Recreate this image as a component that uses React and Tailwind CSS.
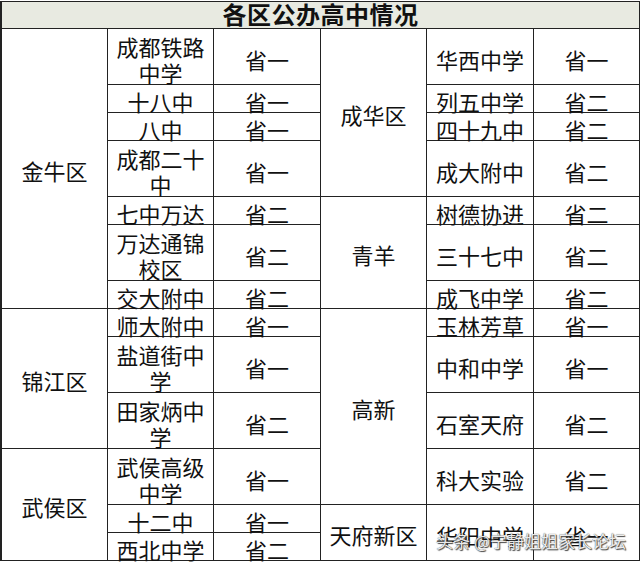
const left = [
  {
    name: '金牛区',
    rows: [
      { school: ['成都铁路', '中学'], level: '省一' },
      { school: ['十八中'], level: '省一' },
      { school: ['八中'], level: '省一' },
      { school: ['成都二十', '中'], level: '省一' },
      { school: ['七中万达'], level: '省二' },
      { school: ['万达通锦', '校区'], level: '省二' },
      { school: ['交大附中'], level: '省二' },
    ],
  },
  {
    name: '锦江区',
    rows: [
      { school: ['师大附中'], level: '省一' },
      { school: ['盐道街中', '学'], level: '省一' },
      { school: ['田家炳中', '学'], level: '省二' },
    ],
  },
  {
    name: '武侯区',
    rows: [
      { school: ['武侯高级', '中学'], level: '省一' },
      { school: ['十二中'], level: '省一' },
      { school: ['西北中学'], level: '省二' },
    ],
  },
];

const right = [
  {
    name: '成华区',
    rows: [
      { school: ['华西中学'], level: '省一', tall: true },
      { school: ['列五中学'], level: '省二' },
      { school: ['四十九中'], level: '省二' },
      { school: ['成大附中'], level: '省二', tall: true },
    ],
  },
  {
    name: '青羊',
    rows: [
      { school: ['树德协进'], level: '省二' },
      { school: ['三十七中'], level: '省二', tall: true },
      { school: ['成飞中学'], level: '省二' },
    ],
  },
  {
    name: '高新',
    rows: [
      { school: ['玉林芳草'], level: '省一' },
      { school: ['中和中学'], level: '省一', tall: true },
      { school: ['石室天府'], level: '省二', tall: true },
      { school: ['科大实验'], level: '省二', tall: true },
    ],
  },
  {
    name: '天府新区',
    rows: [{ school: ['华阳中学'], level: '省一', tall: true }],
  },
];

function Half({ groups, side }) {
  const schoolW = side === 'left' ? 'w-[106px]' : 'w-[107px]';
  return (
    <div className={side === 'left' ? 'flex w-[319px] flex-col border-r border-[#222]' : 'flex flex-1 flex-col'}>
      {groups.map((g) => (
        <div key={g.name} className="flex">
          <div className="flex w-[106px] shrink-0 items-center justify-center border-r border-b border-[#222] pt-[4px]">
            {g.name}
          </div>
          <div className="flex flex-1 flex-col">
            {g.rows.map((r, i) => {
              const tall = r.tall || r.school.length > 1;
              return (
                <div key={i} className={`flex border-b border-[#222] ${tall ? 'h-[56px]' : 'h-[28px]'}`}>
                  <div className={`${schoolW} flex shrink-0 flex-col items-center justify-center border-r border-[#222] pt-[5px] leading-[26px]`}>
                    {r.school.map((s) => (
                      <span key={s} className="whitespace-nowrap">{s}</span>
                    ))}
                  </div>
                  <div className="flex flex-1 items-center justify-center pt-[5px] leading-[26px]">{r.level}</div>
                </div>
              );
            })}
          </div>
        </div>
      ))}
    </div>
  );
}

export default function App() {
  return (
    <div className="relative h-[563px] w-[640px] overflow-hidden bg-white pt-[1px] font-['Noto_Sans_CJK_SC',sans-serif] text-[22px] text-[#111]">
      <div className="w-[640px] border-l-2 border-r border-[#222]">
        <div className="flex h-[28px] items-end justify-center overflow-hidden border-t border-b border-[#222] bg-[#e8eae1] text-[24px] font-bold leading-[28px] tracking-[0.5px]">
          各区公办高中情况
        </div>
        <div className="flex">
          <Half groups={left} side="left" />
          <Half groups={right} side="right" />
        </div>
      </div>
      <div className="absolute right-[14px] bottom-[11px] text-[17px] leading-[22px] text-white/90 [text-shadow:0_0_1px_#222,1px_1px_1px_#444]">
        头条 @宁静姐姐家长论坛
      </div>
    </div>
  );
}
